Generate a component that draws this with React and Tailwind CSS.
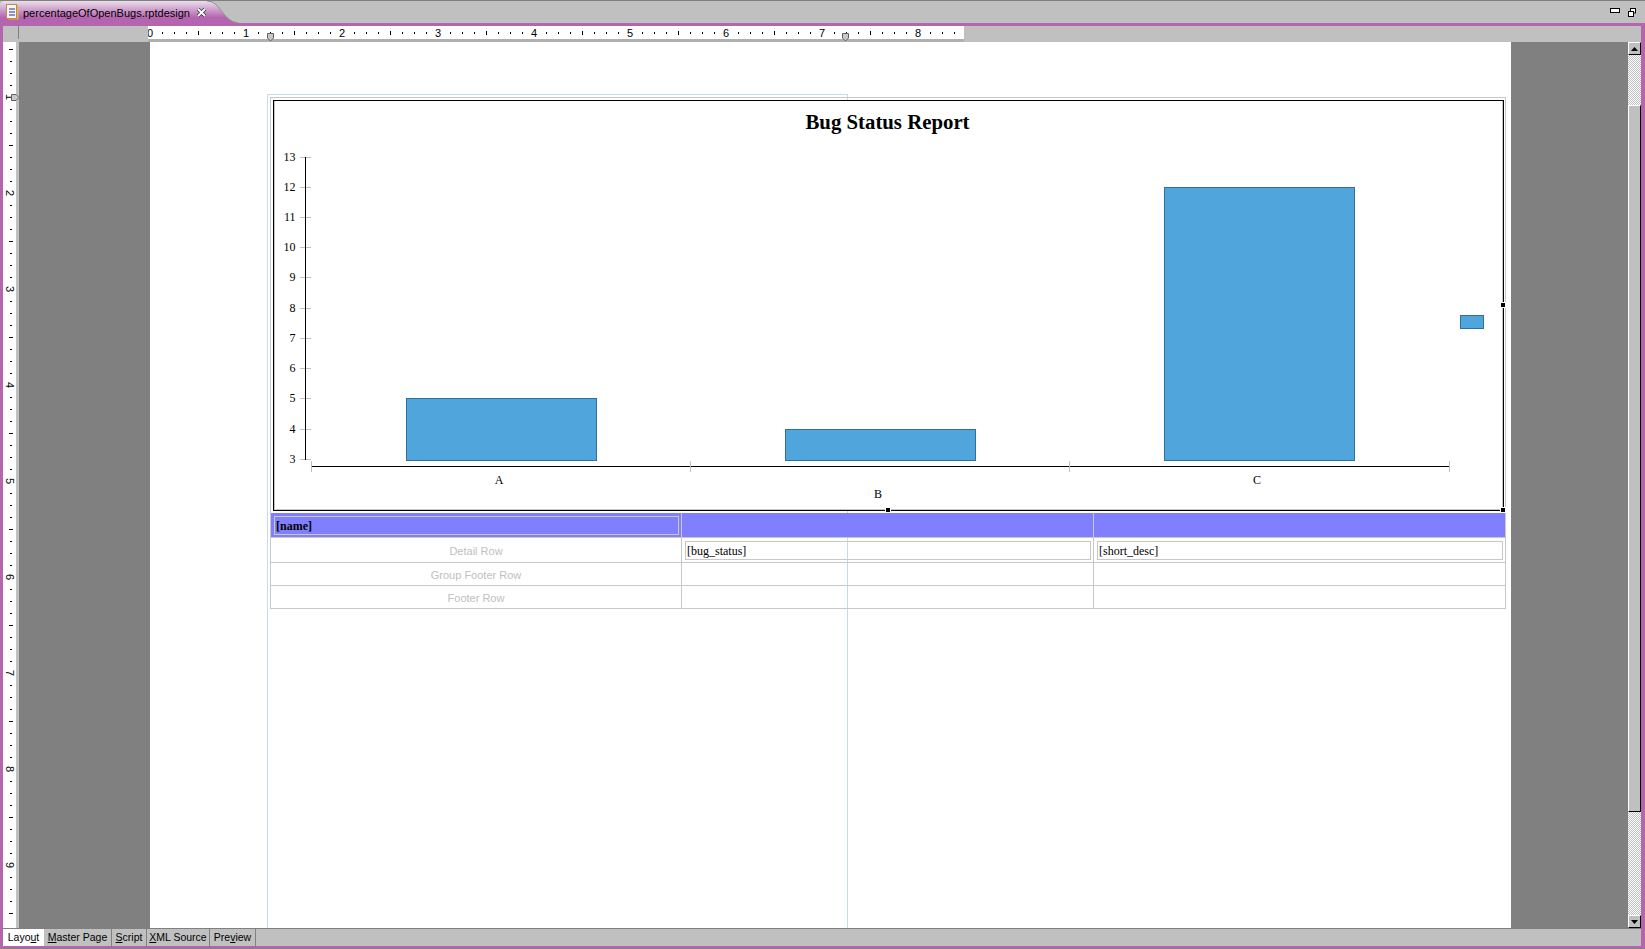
import React from "react";

const serif = "[font-family:'Liberation_Serif',serif]";

const yLabels = [13, 12, 11, 10, 9, 8, 7, 6, 5, 4, 3];
const yTicks = [157, 187, 217, 247, 277, 308, 338, 368, 398, 429, 459];
const bars = [
  { x: 406, w: 191, top: 398, label: "A", lx: 499, ly: 484 },
  { x: 785, w: 191, top: 429, label: "B", lx: 878, ly: 498 },
  { x: 1164, w: 191, top: 187, label: "C", lx: 1257, ly: 484 },
];
const tabs = [
  { pre: "", key: "M", post: "aster Page", w: "w-[68px]" },
  { pre: "", key: "S", post: "cript", w: "w-[35px]" },
  { pre: "", key: "X", post: "ML Source", w: "w-[63px]" },
  { pre: "Pre", key: "v", post: "iew", w: "w-[46px]" },
];

function HRuler() {
  const ticks = [];
  for (let k = 0; k <= 67; k++) ticks.push(k);
  return (
    <svg width="816" height="13" viewBox="148 26 816 13" className="block" shapeRendering="crispEdges">
      <rect x="148" y="26" width="816" height="13" fill="#fff" />
      {ticks.map((k) => {
        const x = 150 + k * 12;
        if (k % 8 === 0) {
          return (
            <text key={k} x={x} y="37" textAnchor="middle" fontSize="11" fill="#000" fontFamily="'Liberation Sans',sans-serif">
              {k / 8}
            </text>
          );
        }
        const tall = k % 8 === 4;
        return <rect key={k} x={x} y={tall ? 31 : 32} width="1" height={tall ? 4 : 2} fill="#000" />;
      })}
    </svg>
  );
}

function VRuler() {
  const ticks = [];
  for (let k = -4; k <= 68; k++) ticks.push(k);
  return (
    <svg width="13" height="886" viewBox="3 42 13 886" className="block" shapeRendering="crispEdges">
      {ticks.map((k) => {
        const y = 97 + k * 12;
        if (k >= 0 && k % 8 === 0) {
          return (
            <text
              key={k}
              x="10"
              y={y}
              textAnchor="middle"
              dominantBaseline="central"
              fontSize="11"
              fill="#000"
              fontFamily="'Liberation Sans',sans-serif"
              transform={`rotate(90 10 ${y})`}
            >
              {1 + k / 8}
            </text>
          );
        }
        const wide = ((k % 8) + 8) % 8 === 4;
        return <rect key={k} x={wide ? 9 : 10} y={y} width={wide ? 4 : 2} height="1" fill="#000" />;
      })}
    </svg>
  );
}

function ChartDrawing() {
  return (
    <svg width="1227" height="408" viewBox="275 101 1227 408" className="block">
      <text x="887.5" y="129" textAnchor="middle" fontSize="20.8" fontWeight="700" fill="#000" fontFamily="'Liberation Serif',serif">
        Bug Status Report
      </text>
      <g shapeRendering="crispEdges">
        {yLabels.map((n, i) => {
          const y = yTicks[i];
          return (
            <g key={n}>
              <rect x="300" y={y} width="11" height="1" fill="#c0c0c0" />
              <text x="295.5" y={y + 3.5} textAnchor="end" fontSize="12" fill="#000" fontFamily="'Liberation Serif',serif">
                {n}
              </text>
            </g>
          );
        })}
        <rect x="305" y="157" width="1" height="303" fill="#000" />
        <rect x="311" y="466" width="1139" height="1" fill="#000" />
        {[311, 690, 1069, 1449].map((x) => (
          <rect key={x} x={x} y="461" width="1" height="11" fill="#c0c0c0" />
        ))}
        {bars.map((b) => (
          <rect key={b.label} x={b.x + 0.5} y={b.top + 0.5} width={b.w - 1} height={460 - b.top} fill="#50a5dc" stroke="#2f7199" />
        ))}
        <rect x="1460.5" y="315.5" width="23" height="13" fill="#50a5dc" stroke="#2f7199" />
      </g>
      {bars.map((b) => (
        <text key={b.label} x={b.lx} y={b.ly} textAnchor="middle" fontSize="12" fill="#000" fontFamily="'Liberation Serif',serif">
          {b.label}
        </text>
      ))}
    </svg>
  );
}

function Handle({ className }) {
  return <div className={`absolute w-[6px] h-[6px] bg-black border border-white ${className}`} />;
}

function RulerMarker({ className, vertical }) {
  return (
    <svg width="9" height="9" viewBox="0 0 9 9" className={`absolute ${className}`}>
      <path
        d={vertical ? "M0.5 1.5H5L8 4.5L5 7.5H0.5Z" : "M1.5 0.5V5L4.5 8L7.5 5V0.5Z"}
        fill="#c8c8c8"
        stroke="#606060"
      />
    </svg>
  );
}

function ScrollButton({ down }) {
  return (
    <div className="h-[13px] bg-[#c0c0c0] border-t border-l border-t-white border-l-white border-r border-b border-r-black border-b-black flex items-center justify-center shrink-0">
      <svg width="7" height="4" viewBox="0 0 7 4">
        <path d={down ? "M0 0H7L3.5 4Z" : "M0 4H7L3.5 0Z"} fill="#000" />
      </svg>
    </div>
  );
}

export default function App() {
  return (
    <div className="w-[1645px] h-[949px] overflow-hidden flex flex-col bg-[#808080] text-[11px] text-black [font-family:'Liberation_Sans',sans-serif]">
      {/* editor title bar */}
      <div className="relative h-[23px] shrink-0 bg-[#c0c0c0] border-t border-[#808080] flex items-center">
        <svg width="240" height="22" viewBox="0 0 240 22" className="absolute left-0 top-0">
          <defs>
            <linearGradient id="tabFill" x1="0" y1="0" x2="0" y2="1">
              <stop offset="0" stopColor="#ecdfec" />
              <stop offset="0.75" stopColor="#b565b0" />
              <stop offset="1" stopColor="#b565b0" />
            </linearGradient>
          </defs>
          <path d="M0 22V5Q0 0 5 0H207C221 0 222 20 238 22Z" fill="url(#tabFill)" />
          <path d="M207 0C221 0 222 20 238 22" fill="none" stroke="#909090" />
        </svg>
        <svg width="13" height="16" viewBox="0 0 13 16" className="relative ml-[6px] mr-[4px] shrink-0">
          <rect x="2.5" y="1.5" width="10" height="14" fill="#e0b060" />
          <rect x="0.5" y="0.5" width="10" height="14" fill="#f4f4fa" stroke="#b89038" />
          <path d="M3 5H9M3 8H9M3 11H9" stroke="#30308a" strokeWidth="1" />
        </svg>
        <span className="relative pt-[2px] leading-none whitespace-nowrap text-[11px]">percentageOfOpenBugs.rptdesign</span>
        <svg width="11" height="11" viewBox="0 0 11 11" className="relative ml-[6px] shrink-0">
          <path d="M2 2L9 9M9 2L2 9" stroke="#404040" strokeWidth="3.6" />
          <path d="M2 2L9 9M9 2L2 9" stroke="#fff" strokeWidth="1.8" />
        </svg>
        <div className="ml-auto mr-[9px] flex items-start gap-[8px] relative">
          <div className="w-[10px] h-[5px] bg-white border border-black" />
          <svg width="8" height="9" viewBox="0 0 8 9">
            <rect x="2.5" y="0.5" width="5" height="4.5" fill="#fff" stroke="#000" />
            <rect x="0.5" y="3.5" width="5" height="5" fill="#fff" stroke="#000" />
          </svg>
        </div>
      </div>
      <div className="h-[3px] shrink-0 bg-[#b565b0]" />

      {/* ruler, canvas, scrollbar */}
      <div className="flex-1 min-h-0 flex flex-col bg-[#c0c0c0] border-x-[3px] border-[#b565b0] border-r-[4px]">
        <div className="relative h-[16px] shrink-0 flex bg-[#c0c0c0]">
          <div className="w-[145px] shrink-0 relative">
            <div className="absolute left-[15px] top-0 bottom-[3px] w-px bg-[#808080]" />
          </div>
          <div className="relative border-b-[3px] border-[#b0b0b0] h-[16px]">
            <HRuler />
            <RulerMarker className="left-[118px] top-[7px]" />
            <RulerMarker className="left-[693px] top-[7px]" />
          </div>
        </div>

        <div className="flex-1 min-h-0 flex">
          <div className="relative w-[13px] shrink-0 bg-white">
            <VRuler />
            <RulerMarker vertical className="left-[8px] top-[51px]" />
          </div>
          <div className="w-[3px] shrink-0 bg-[#c0c0c0]" />

          <div className="w-[131px] shrink-0 bg-[#808080]" />

          {/* report page */}
          <div className="relative w-[1361px] shrink-0 bg-white pt-[55px] pl-[120px] overflow-hidden">
            <div className="absolute left-[117px] top-[52px] bottom-0 w-[581px] border-l border-t border-r border-[#c6dcec]" />
            <div className="relative w-[1236px] h-[416px] border border-b-0 border-[#c8c8c8] pt-[2px] pl-[2px]">
              <div className="relative w-[1231px] h-[411px] border border-black bg-white">
                <div className="border-l border-r border-b border-[#c8c8c8] h-full">
                  <ChartDrawing />
                </div>
                <Handle className="right-[-3px] top-[201px]" />
                <Handle className="left-[611px] bottom-[-3px]" />
                <Handle className="right-[-3px] bottom-[-3px]" />
              </div>
            </div>

            {/* table */}
            <div className="relative w-[1236px] grid grid-cols-[411px_412px_1fr] border-x border-b border-[#c8c8c8] text-[12px]">
              <div className="h-[25px] bg-[#8080ff] border-b border-r border-[#c8c8c8] p-[3px_2px_2px_3px]">
                <div className={`h-[19px] border border-[#c8c8c8] pl-px font-bold leading-[19px] ${serif}`}>[name]</div>
              </div>
              <div className="h-[25px] bg-[#8080ff] border-b border-r border-[#c8c8c8]" />
              <div className="h-[25px] bg-[#8080ff] border-b border-[#c8c8c8]" />

              <div className="h-[25px] border-b border-r border-[#c8c8c8] pt-[3px] text-[11px] text-[#c0c0c0] flex items-center justify-center">Detail Row</div>
              <div className="h-[25px] border-b border-r border-[#c8c8c8] p-[3px_2px_3px_3px]">
                <div className={`h-[19px] border border-[#c8c8c8] pl-px leading-[19px] ${serif}`}>[bug_status]</div>
              </div>
              <div className="h-[25px] border-b border-[#c8c8c8] p-[3px_2px_3px_3px]">
                <div className={`h-[19px] border border-[#c8c8c8] pl-px leading-[19px] ${serif}`}>[short_desc]</div>
              </div>

              <div className="h-[23px] border-b border-r border-[#c8c8c8] pt-[3px] text-[11px] text-[#c0c0c0] flex items-center justify-center">Group Footer Row</div>
              <div className="h-[23px] border-b border-r border-[#c8c8c8]" />
              <div className="h-[23px] border-b border-[#c8c8c8]" />

              <div className="h-[22px] border-r border-[#c8c8c8] pt-[3px] text-[11px] text-[#c0c0c0] flex items-center justify-center">Footer Row</div>
              <div className="h-[22px] border-r border-[#c8c8c8]" />
              <div className="h-[22px]" />
            </div>
          </div>

          <div className="flex-1 bg-[#808080]" />

          {/* scrollbar */}
          <div className="w-[13px] shrink-0 flex flex-col">
            <ScrollButton />
            <div className="h-[50px] shrink-0 bg-[repeating-conic-gradient(#c0c0c0_0_25%,#ffffff_0_50%)] bg-[length:2px_2px]" />
            <div className="h-[707px] shrink-0 bg-[#c0c0c0] border-t border-l border-t-white border-l-white border-r border-b border-r-black border-b-black" />
            <div className="flex-1 bg-[repeating-conic-gradient(#c0c0c0_0_25%,#ffffff_0_50%)] bg-[length:2px_2px]" />
            <ScrollButton down />
          </div>
        </div>

        {/* editor pages */}
        <div className="h-[18px] shrink-0 border-t border-[#808080] flex bg-[#c0c0c0] text-[10.5px]">
          <div className="w-[41px] bg-white flex items-center justify-center">
            <span>Layo<span className="underline">u</span>t</span>
          </div>
          {tabs.map((t) => (
            <div key={t.key} className={`${t.w} border-r border-[#808080] flex items-center justify-center`}>
              <span>
                {t.pre}
                <span className="underline">{t.key}</span>
                {t.post}
              </span>
            </div>
          ))}
        </div>
      </div>
      <div className="h-[2px] shrink-0 bg-[#b565b0]" />
      <div className="h-px shrink-0 bg-[#808080]" />
    </div>
  );
}
